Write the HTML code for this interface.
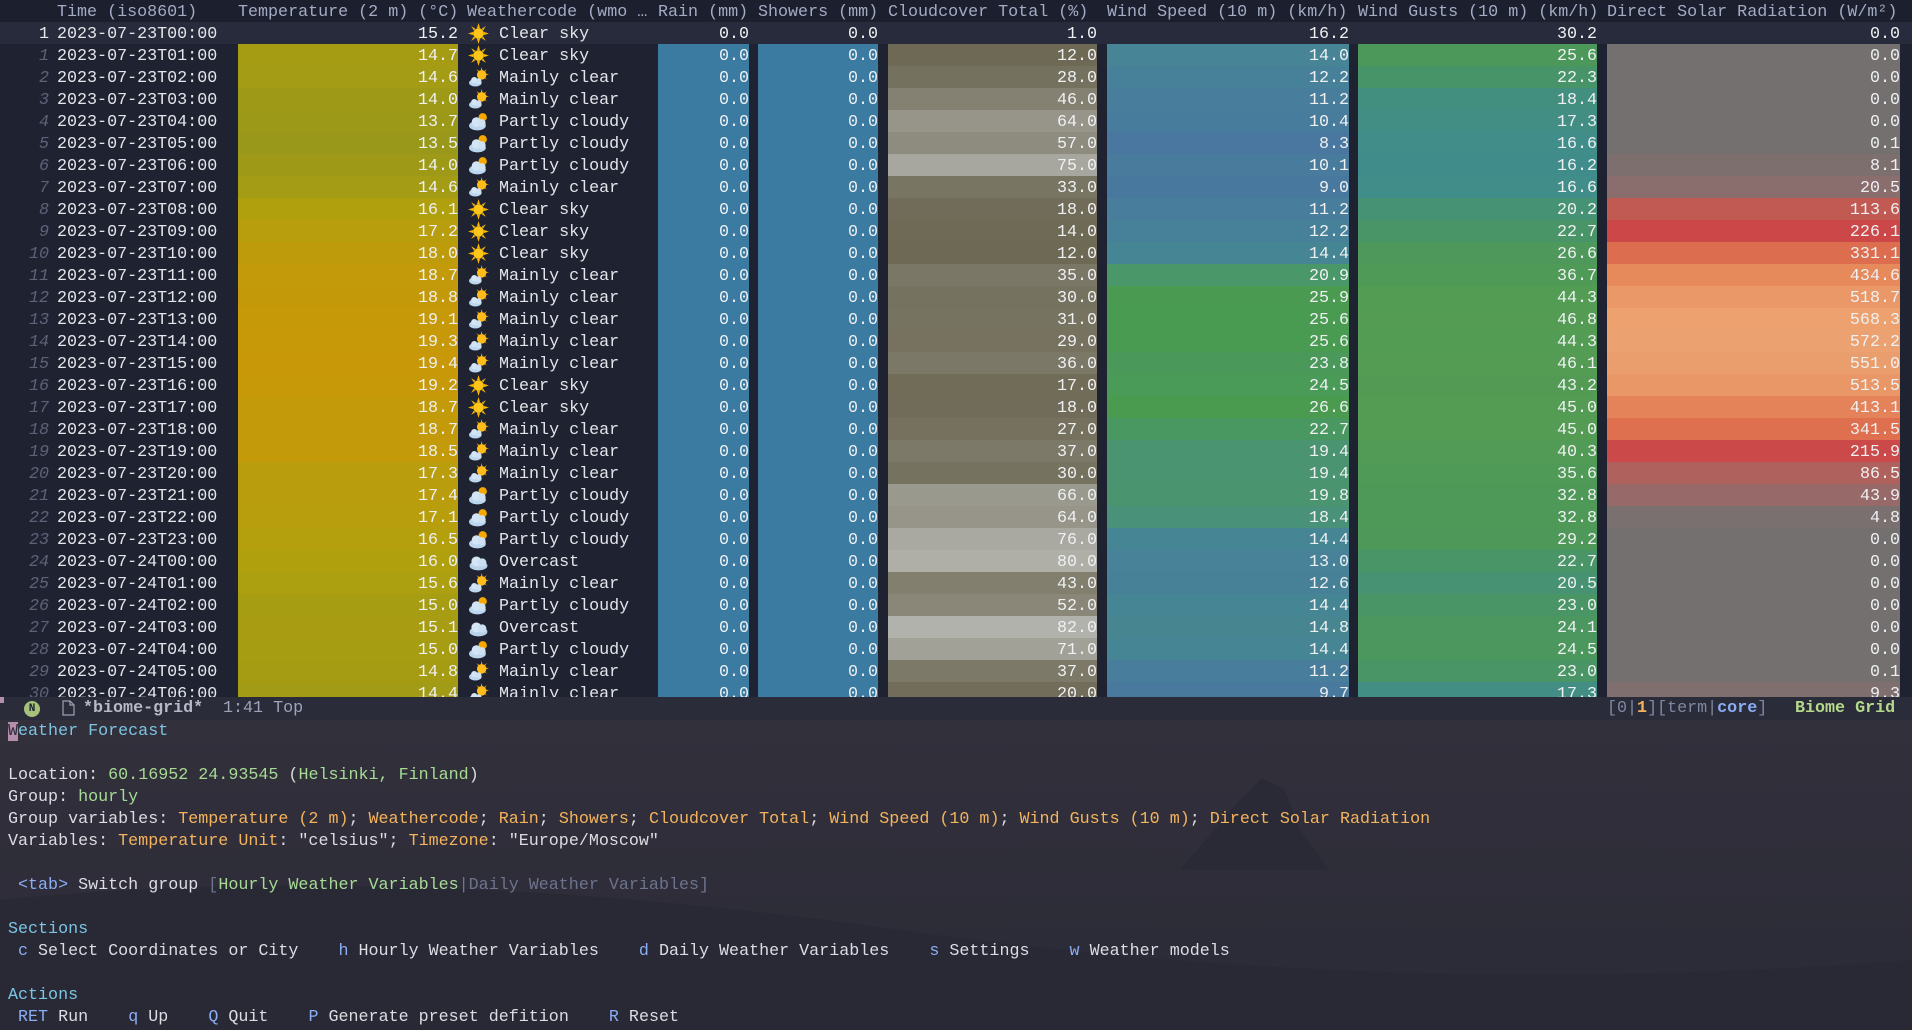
<!DOCTYPE html>
<html><head><meta charset="utf-8">
<style>
*{margin:0;padding:0;box-sizing:border-box}
body{width:1912px;height:1030px;overflow:hidden;background:#2c2c3a;font-family:"Liberation Mono","DejaVu Sans Mono",monospace;font-size:16.7px;color:#dcdde3;position:relative}
#bg{position:absolute;left:0;top:0;width:1912px;height:1030px}
#tbl{position:absolute;left:0;top:0;width:1912px;height:697px;overflow:hidden;background:#1f2231}
.r{position:absolute;left:0;width:1912px;height:22px;line-height:22px;white-space:pre}
.r span{position:absolute;top:0;height:22px;overflow:hidden;padding-top:2px;line-height:21px}
.hd{color:#a4abc4;background:#1c1f2d}
.cur{background:#272b3b}
.ln{left:0;width:49px;text-align:right;color:#5d6277;font-style:italic}
.cur .ln{color:#e8e8ee;font-style:normal}
.t{left:57px;width:175px;color:#e4e5ea}
.c{text-align:right;color:#eef0f2}
.tp{left:238px;width:220px;background:#b09c10}
.wc{left:468px;width:182px;color:#e4e5ea}
.wc svg{position:absolute;left:0;top:1px;width:21px;height:21px}
.wc b{font-weight:normal;position:absolute;left:31px}
.rn{left:658px;width:91px;background:#3b7aa1}
.sh{left:758px;width:120px;background:#3b7aa1}
.cc{left:888px;width:209px;background:#85826f}
.ws{left:1107px;width:242px;background:#4a8a80}
.wg{left:1358px;width:239px;background:#4c9560}
.sr{left:1607px;width:293px;background:#9a6d68}
.hd span,.cur span{background:transparent!important}
.hd span{text-align:left;color:#a4abc4}
.ml{position:absolute;left:0;top:697px;width:1912px;height:23px;background:#2b2c39;line-height:23px;white-space:pre}
.ml span{position:absolute;top:0}
.ln2{position:absolute;left:8px;height:22px;line-height:22px;white-space:pre}
.bl{color:#7dc4e4}.gr{color:#a6da95}.or{color:#f5b35c}.kb{color:#8aadf4}.dim{color:#6e738d}
</style></head><body>
<svg id="bg" viewBox="0 0 1912 1030" preserveAspectRatio="none">
<defs><linearGradient id="g" x1="0" y1="0" x2="0" y2="1"><stop offset="0" stop-color="#2e2d3a"/><stop offset="0.55" stop-color="#36323d"/><stop offset="1" stop-color="#2a2b37"/></linearGradient></defs>
<rect width="1912" height="1030" fill="url(#g)"/>
<path d="M1180 870 L1240 800 L1262 778 L1285 790 L1300 830 L1330 870 Z" fill="#2a2a36"/>
<path d="M0 900 Q400 860 900 930 T1912 960 L1912 1030 L0 1030Z" fill="#282935"/>
</svg>
<svg width="0" height="0" style="position:absolute">
<defs>
<symbol id="sun" viewBox="0 0 20 20"><g fill="#f7b500"><polygon points="10,0 11.5,5 8.5,5"/><polygon points="10,20 11.5,15 8.5,15"/><polygon points="0,10 5,8.5 5,11.5"/><polygon points="20,10 15,8.5 15,11.5"/><polygon points="3,3 7,5.5 5.5,7"/><polygon points="17,17 13,14.5 14.5,13"/><polygon points="17,3 14.5,7 13,5.5"/><polygon points="3,17 5.5,13 7,14.5"/></g><circle cx="10" cy="10" r="5" fill="#ffc61a"/></symbol>
<symbol id="mc" viewBox="0 0 20 20"><g fill="#f5a800"><polygon points="13,0 14,4 12,4"/><polygon points="20,7 16,8 16,6"/><polygon points="18,2 16,5 15,4"/><polygon points="8,2 11,4 10,5"/><polygon points="18,12 15,10 16,9"/></g><circle cx="13" cy="7.5" r="4.5" fill="#ffbb1a"/><ellipse cx="7" cy="15" rx="6" ry="3.6" fill="#bcd6ee"/><circle cx="6" cy="12.5" r="3" fill="#d4e6f5"/><circle cx="10" cy="13.5" r="2.8" fill="#cfe2f3"/></symbol>
<symbol id="pc" viewBox="0 0 20 20"><circle cx="14" cy="6" r="4" fill="#f5a800"/><ellipse cx="9" cy="14" rx="8" ry="4.5" fill="#bcd6ee"/><circle cx="8" cy="10.5" r="4.5" fill="#d4e6f5"/><circle cx="13" cy="11.5" r="3.8" fill="#cfe2f3"/></symbol>
<symbol id="oc" viewBox="0 0 20 20"><ellipse cx="10" cy="14" rx="8.5" ry="4.5" fill="#b8d2ea"/><circle cx="8" cy="10" r="4.8" fill="#d4e6f5"/><circle cx="13.5" cy="11" r="4" fill="#cadff2"/></symbol>
</defs></svg>
<div id="tbl">
<div class="r hd" style="top:0"><span class="t">Time (iso8601)</span><span class="tp" style="width:230px">Temperature (2 m) (°C)</span><span class="wc" style="left:467px;width:190px">Weathercode (wmo …</span><span class="rn" style="width:95px">Rain (mm)</span><span class="sh">Showers (mm)</span><span class="cc" style="width:215px">Cloudcover Total (%)</span><span class="ws" style="width:250px">Wind Speed (10 m) (km/h)</span><span class="wg" style="width:249px">Wind Gusts (10 m) (km/h)</span><span class="sr" style="width:305px">Direct Solar Radiation (W/m²)</span></div>
<div class="r cur" style="top:22px"><span class="ln">1</span><span class="t">2023-07-23T00:00</span><span class="c tp">15.2</span><span class="wc"><svg><use href="#sun" width="21" height="21"/></svg><b>Clear sky</b></span><span class="c rn">0.0</span><span class="c sh">0.0</span><span class="c cc">1.0</span><span class="c ws">16.2</span><span class="c wg">30.2</span><span class="c sr">0.0</span></div>
<div class="r" style="top:44px"><span class="ln">1</span><span class="t">2023-07-23T01:00</span><span class="c tp">14.7</span><span class="wc"><svg><use href="#sun" width="21" height="21"/></svg><b>Clear sky</b></span><span class="c rn">0.0</span><span class="c sh">0.0</span><span class="c cc">12.0</span><span class="c ws">14.0</span><span class="c wg">25.6</span><span class="c sr">0.0</span></div>
<div class="r" style="top:66px"><span class="ln">2</span><span class="t">2023-07-23T02:00</span><span class="c tp">14.6</span><span class="wc"><svg><use href="#mc" width="21" height="21"/></svg><b>Mainly clear</b></span><span class="c rn">0.0</span><span class="c sh">0.0</span><span class="c cc">28.0</span><span class="c ws">12.2</span><span class="c wg">22.3</span><span class="c sr">0.0</span></div>
<div class="r" style="top:88px"><span class="ln">3</span><span class="t">2023-07-23T03:00</span><span class="c tp">14.0</span><span class="wc"><svg><use href="#mc" width="21" height="21"/></svg><b>Mainly clear</b></span><span class="c rn">0.0</span><span class="c sh">0.0</span><span class="c cc">46.0</span><span class="c ws">11.2</span><span class="c wg">18.4</span><span class="c sr">0.0</span></div>
<div class="r" style="top:110px"><span class="ln">4</span><span class="t">2023-07-23T04:00</span><span class="c tp">13.7</span><span class="wc"><svg><use href="#pc" width="21" height="21"/></svg><b>Partly cloudy</b></span><span class="c rn">0.0</span><span class="c sh">0.0</span><span class="c cc">64.0</span><span class="c ws">10.4</span><span class="c wg">17.3</span><span class="c sr">0.0</span></div>
<div class="r" style="top:132px"><span class="ln">5</span><span class="t">2023-07-23T05:00</span><span class="c tp">13.5</span><span class="wc"><svg><use href="#pc" width="21" height="21"/></svg><b>Partly cloudy</b></span><span class="c rn">0.0</span><span class="c sh">0.0</span><span class="c cc">57.0</span><span class="c ws">8.3</span><span class="c wg">16.6</span><span class="c sr">0.1</span></div>
<div class="r" style="top:154px"><span class="ln">6</span><span class="t">2023-07-23T06:00</span><span class="c tp">14.0</span><span class="wc"><svg><use href="#pc" width="21" height="21"/></svg><b>Partly cloudy</b></span><span class="c rn">0.0</span><span class="c sh">0.0</span><span class="c cc">75.0</span><span class="c ws">10.1</span><span class="c wg">16.2</span><span class="c sr">8.1</span></div>
<div class="r" style="top:176px"><span class="ln">7</span><span class="t">2023-07-23T07:00</span><span class="c tp">14.6</span><span class="wc"><svg><use href="#mc" width="21" height="21"/></svg><b>Mainly clear</b></span><span class="c rn">0.0</span><span class="c sh">0.0</span><span class="c cc">33.0</span><span class="c ws">9.0</span><span class="c wg">16.6</span><span class="c sr">20.5</span></div>
<div class="r" style="top:198px"><span class="ln">8</span><span class="t">2023-07-23T08:00</span><span class="c tp">16.1</span><span class="wc"><svg><use href="#sun" width="21" height="21"/></svg><b>Clear sky</b></span><span class="c rn">0.0</span><span class="c sh">0.0</span><span class="c cc">18.0</span><span class="c ws">11.2</span><span class="c wg">20.2</span><span class="c sr">113.6</span></div>
<div class="r" style="top:220px"><span class="ln">9</span><span class="t">2023-07-23T09:00</span><span class="c tp">17.2</span><span class="wc"><svg><use href="#sun" width="21" height="21"/></svg><b>Clear sky</b></span><span class="c rn">0.0</span><span class="c sh">0.0</span><span class="c cc">14.0</span><span class="c ws">12.2</span><span class="c wg">22.7</span><span class="c sr">226.1</span></div>
<div class="r" style="top:242px"><span class="ln">10</span><span class="t">2023-07-23T10:00</span><span class="c tp">18.0</span><span class="wc"><svg><use href="#sun" width="21" height="21"/></svg><b>Clear sky</b></span><span class="c rn">0.0</span><span class="c sh">0.0</span><span class="c cc">12.0</span><span class="c ws">14.4</span><span class="c wg">26.6</span><span class="c sr">331.1</span></div>
<div class="r" style="top:264px"><span class="ln">11</span><span class="t">2023-07-23T11:00</span><span class="c tp">18.7</span><span class="wc"><svg><use href="#mc" width="21" height="21"/></svg><b>Mainly clear</b></span><span class="c rn">0.0</span><span class="c sh">0.0</span><span class="c cc">35.0</span><span class="c ws">20.9</span><span class="c wg">36.7</span><span class="c sr">434.6</span></div>
<div class="r" style="top:286px"><span class="ln">12</span><span class="t">2023-07-23T12:00</span><span class="c tp">18.8</span><span class="wc"><svg><use href="#mc" width="21" height="21"/></svg><b>Mainly clear</b></span><span class="c rn">0.0</span><span class="c sh">0.0</span><span class="c cc">30.0</span><span class="c ws">25.9</span><span class="c wg">44.3</span><span class="c sr">518.7</span></div>
<div class="r" style="top:308px"><span class="ln">13</span><span class="t">2023-07-23T13:00</span><span class="c tp">19.1</span><span class="wc"><svg><use href="#mc" width="21" height="21"/></svg><b>Mainly clear</b></span><span class="c rn">0.0</span><span class="c sh">0.0</span><span class="c cc">31.0</span><span class="c ws">25.6</span><span class="c wg">46.8</span><span class="c sr">568.3</span></div>
<div class="r" style="top:330px"><span class="ln">14</span><span class="t">2023-07-23T14:00</span><span class="c tp">19.3</span><span class="wc"><svg><use href="#mc" width="21" height="21"/></svg><b>Mainly clear</b></span><span class="c rn">0.0</span><span class="c sh">0.0</span><span class="c cc">29.0</span><span class="c ws">25.6</span><span class="c wg">44.3</span><span class="c sr">572.2</span></div>
<div class="r" style="top:352px"><span class="ln">15</span><span class="t">2023-07-23T15:00</span><span class="c tp">19.4</span><span class="wc"><svg><use href="#mc" width="21" height="21"/></svg><b>Mainly clear</b></span><span class="c rn">0.0</span><span class="c sh">0.0</span><span class="c cc">36.0</span><span class="c ws">23.8</span><span class="c wg">46.1</span><span class="c sr">551.0</span></div>
<div class="r" style="top:374px"><span class="ln">16</span><span class="t">2023-07-23T16:00</span><span class="c tp">19.2</span><span class="wc"><svg><use href="#sun" width="21" height="21"/></svg><b>Clear sky</b></span><span class="c rn">0.0</span><span class="c sh">0.0</span><span class="c cc">17.0</span><span class="c ws">24.5</span><span class="c wg">43.2</span><span class="c sr">513.5</span></div>
<div class="r" style="top:396px"><span class="ln">17</span><span class="t">2023-07-23T17:00</span><span class="c tp">18.7</span><span class="wc"><svg><use href="#sun" width="21" height="21"/></svg><b>Clear sky</b></span><span class="c rn">0.0</span><span class="c sh">0.0</span><span class="c cc">18.0</span><span class="c ws">26.6</span><span class="c wg">45.0</span><span class="c sr">413.1</span></div>
<div class="r" style="top:418px"><span class="ln">18</span><span class="t">2023-07-23T18:00</span><span class="c tp">18.7</span><span class="wc"><svg><use href="#mc" width="21" height="21"/></svg><b>Mainly clear</b></span><span class="c rn">0.0</span><span class="c sh">0.0</span><span class="c cc">27.0</span><span class="c ws">22.7</span><span class="c wg">45.0</span><span class="c sr">341.5</span></div>
<div class="r" style="top:440px"><span class="ln">19</span><span class="t">2023-07-23T19:00</span><span class="c tp">18.5</span><span class="wc"><svg><use href="#mc" width="21" height="21"/></svg><b>Mainly clear</b></span><span class="c rn">0.0</span><span class="c sh">0.0</span><span class="c cc">37.0</span><span class="c ws">19.4</span><span class="c wg">40.3</span><span class="c sr">215.9</span></div>
<div class="r" style="top:462px"><span class="ln">20</span><span class="t">2023-07-23T20:00</span><span class="c tp">17.3</span><span class="wc"><svg><use href="#mc" width="21" height="21"/></svg><b>Mainly clear</b></span><span class="c rn">0.0</span><span class="c sh">0.0</span><span class="c cc">30.0</span><span class="c ws">19.4</span><span class="c wg">35.6</span><span class="c sr">86.5</span></div>
<div class="r" style="top:484px"><span class="ln">21</span><span class="t">2023-07-23T21:00</span><span class="c tp">17.4</span><span class="wc"><svg><use href="#pc" width="21" height="21"/></svg><b>Partly cloudy</b></span><span class="c rn">0.0</span><span class="c sh">0.0</span><span class="c cc">66.0</span><span class="c ws">19.8</span><span class="c wg">32.8</span><span class="c sr">43.9</span></div>
<div class="r" style="top:506px"><span class="ln">22</span><span class="t">2023-07-23T22:00</span><span class="c tp">17.1</span><span class="wc"><svg><use href="#pc" width="21" height="21"/></svg><b>Partly cloudy</b></span><span class="c rn">0.0</span><span class="c sh">0.0</span><span class="c cc">64.0</span><span class="c ws">18.4</span><span class="c wg">32.8</span><span class="c sr">4.8</span></div>
<div class="r" style="top:528px"><span class="ln">23</span><span class="t">2023-07-23T23:00</span><span class="c tp">16.5</span><span class="wc"><svg><use href="#pc" width="21" height="21"/></svg><b>Partly cloudy</b></span><span class="c rn">0.0</span><span class="c sh">0.0</span><span class="c cc">76.0</span><span class="c ws">14.4</span><span class="c wg">29.2</span><span class="c sr">0.0</span></div>
<div class="r" style="top:550px"><span class="ln">24</span><span class="t">2023-07-24T00:00</span><span class="c tp">16.0</span><span class="wc"><svg><use href="#oc" width="21" height="21"/></svg><b>Overcast</b></span><span class="c rn">0.0</span><span class="c sh">0.0</span><span class="c cc">80.0</span><span class="c ws">13.0</span><span class="c wg">22.7</span><span class="c sr">0.0</span></div>
<div class="r" style="top:572px"><span class="ln">25</span><span class="t">2023-07-24T01:00</span><span class="c tp">15.6</span><span class="wc"><svg><use href="#mc" width="21" height="21"/></svg><b>Mainly clear</b></span><span class="c rn">0.0</span><span class="c sh">0.0</span><span class="c cc">43.0</span><span class="c ws">12.6</span><span class="c wg">20.5</span><span class="c sr">0.0</span></div>
<div class="r" style="top:594px"><span class="ln">26</span><span class="t">2023-07-24T02:00</span><span class="c tp">15.0</span><span class="wc"><svg><use href="#pc" width="21" height="21"/></svg><b>Partly cloudy</b></span><span class="c rn">0.0</span><span class="c sh">0.0</span><span class="c cc">52.0</span><span class="c ws">14.4</span><span class="c wg">23.0</span><span class="c sr">0.0</span></div>
<div class="r" style="top:616px"><span class="ln">27</span><span class="t">2023-07-24T03:00</span><span class="c tp">15.1</span><span class="wc"><svg><use href="#oc" width="21" height="21"/></svg><b>Overcast</b></span><span class="c rn">0.0</span><span class="c sh">0.0</span><span class="c cc">82.0</span><span class="c ws">14.8</span><span class="c wg">24.1</span><span class="c sr">0.0</span></div>
<div class="r" style="top:638px"><span class="ln">28</span><span class="t">2023-07-24T04:00</span><span class="c tp">15.0</span><span class="wc"><svg><use href="#pc" width="21" height="21"/></svg><b>Partly cloudy</b></span><span class="c rn">0.0</span><span class="c sh">0.0</span><span class="c cc">71.0</span><span class="c ws">14.4</span><span class="c wg">24.5</span><span class="c sr">0.0</span></div>
<div class="r" style="top:660px"><span class="ln">29</span><span class="t">2023-07-24T05:00</span><span class="c tp">14.8</span><span class="wc"><svg><use href="#mc" width="21" height="21"/></svg><b>Mainly clear</b></span><span class="c rn">0.0</span><span class="c sh">0.0</span><span class="c cc">37.0</span><span class="c ws">11.2</span><span class="c wg">23.0</span><span class="c sr">0.1</span></div>
<div class="r" style="top:682px"><span class="ln">30</span><span class="t">2023-07-24T06:00</span><span class="c tp">14.4</span><span class="wc"><svg><use href="#mc" width="21" height="21"/></svg><b>Mainly clear</b></span><span class="c rn">0.0</span><span class="c sh">0.0</span><span class="c cc">20.0</span><span class="c ws">9.7</span><span class="c wg">17.3</span><span class="c sr">9.3</span></div>
</div>
<div class="ml">
<div style="position:absolute;left:0;top:0;width:4px;height:6px;background:#b48ead"></div>
<div style="position:absolute;left:24px;top:4px;width:16px;height:16px;border-radius:50%;background:#a6c27a;color:#1e2030;font-size:11px;line-height:16px;text-align:center;font-weight:bold">N</div>
<svg style="position:absolute;left:62px;top:3px" width="13" height="16" viewBox="0 0 13 16"><path d="M1 1 H8 L12 5 V15 H1 Z M8 1 V5 H12" fill="none" stroke="#9aa0b4" stroke-width="1.2"/></svg>
<span style="left:83px;color:#b6b9c8;font-weight:bold">*biome-grid*</span>
<span style="left:223px;color:#9da3b8">1:41 Top</span>
<span style="left:1607px;color:#8087a2">[0|<b style="color:#f5b35c">1</b>][term|<b style="color:#8aadf4">core</b>]</span>
<span style="left:1795px;color:#b5d98a;font-weight:bold">Biome Grid</span>
</div>
<div class="ln2 bl" style="top:721px"><span style="background:#b48ead;color:#2c2c3a">W</span>eather Forecast</div>
<div class="ln2" style="top:765px">Location: <span class="gr">60.16952 24.93545</span> (<span class="gr">Helsinki, Finland</span>)</div>
<div class="ln2" style="top:787px">Group: <span class="gr">hourly</span></div>
<div class="ln2" style="top:809px">Group variables: <span class="or">Temperature (2 m)</span>; <span class="or">Weathercode</span>; <span class="or">Rain</span>; <span class="or">Showers</span>; <span class="or">Cloudcover Total</span>; <span class="or">Wind Speed (10 m)</span>; <span class="or">Wind Gusts (10 m)</span>; <span class="or">Direct Solar Radiation</span></div>
<div class="ln2" style="top:831px">Variables: <span class="or">Temperature Unit</span>: "celsius"; <span class="or">Timezone</span>: "Europe/Moscow"</div>
<div class="ln2" style="top:875px"> <span class="kb">&lt;tab&gt;</span> Switch group <span class="dim">[</span><span class="gr">Hourly Weather Variables</span><span class="dim">|Daily Weather Variables]</span></div>
<div class="ln2 bl" style="top:919px">Sections</div>
<div class="ln2" style="top:941px"> <span class="kb">c</span> Select Coordinates or City    <span class="kb">h</span> Hourly Weather Variables    <span class="kb">d</span> Daily Weather Variables    <span class="kb">s</span> Settings    <span class="kb">w</span> Weather models</div>
<div class="ln2 bl" style="top:985px">Actions</div>
<div class="ln2" style="top:1007px"> <span class="kb">RET</span> Run    <span class="kb">q</span> Up    <span class="kb">Q</span> Quit    <span class="kb">P</span> Generate preset defition    <span class="kb">R</span> Reset</div>
<script>
function lerp(st,v){for(var i=0;i<st.length-1;i++){var a=st[i],b=st[i+1];if(v<=b[0]||i==st.length-2){var t=Math.max(0,Math.min(1,(v-a[0])/(b[0]-a[0])));var c=[];for(var k=0;k<3;k++)c.push(Math.round(a[1][k]+(b[1][k]-a[1][k])*t));return'rgb('+c.join(',')+')';}}}
var S={tp:[[13.5,[154,152,26]],[16,[176,160,14]],[19.4,[200,152,8]]],
cc:[[1,[105,100,78]],[30,[118,114,96]],[60,[145,143,130]],[82,[178,178,172]]],
ws:[[8,[74,118,160]],[14,[70,132,150]],[20,[74,150,110]],[26,[74,155,80]]],
wg:[[16,[64,140,140]],[25,[76,152,90]],[46,[84,156,84]]],
sr:[[0,[117,112,112]],[20,[138,110,110]],[90,[176,96,92]],[120,[196,88,80]],[226,[204,72,72]],[340,[222,112,80]],[440,[230,138,92]],[572,[236,162,112]]]};
document.querySelectorAll('#tbl .r:not(.hd):not(.cur) .c').forEach(function(e){for(var k in S){if(e.classList.contains(k)){e.style.background=lerp(S[k],parseFloat(e.textContent));}}});
</script>
</body></html>
